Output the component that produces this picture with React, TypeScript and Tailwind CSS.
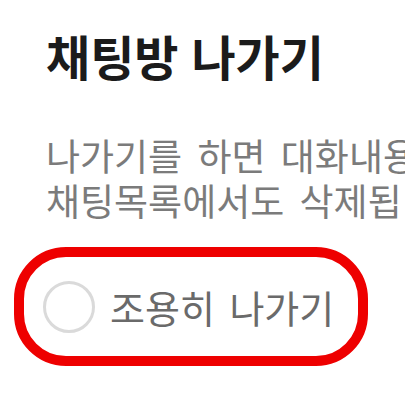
export default function App() {
  return (
    <div
      className="w-[405px] h-[405px] overflow-hidden bg-white"
      style={{ fontFamily: '"Noto Sans CJK KR", "Noto Sans", sans-serif' }}
    >
      {/* Title */}
      <div className="pl-[46px] pt-[25px]">
        <h1 className="text-[48px] leading-[60px] font-bold text-[#1b1b1b] whitespace-nowrap [word-spacing:2px]">
          채팅방 나가기
        </h1>
      </div>

      {/* Description */}
      <div className="pl-[46px] pt-[48px] text-[37px] leading-[45px] text-[#7b7b7b] whitespace-nowrap [word-spacing:7px]">
        <p>나가기를 하면 대화내용이 모두 삭제되고</p>
        <p>채팅목록에서도 삭제됩니다.</p>
      </div>

      {/* Option */}
      <div className="pl-[14px] pt-[24px]">
        <div className="w-[354px] h-[119px] rounded-[52px] border-[10px] border-[#ee0000] flex items-center pl-[19px] gap-[15px]">
          <span className="w-[52px] h-[52px] shrink-0 rounded-full border-[3px] border-[#dadada]" />
          <span className="text-[38px] leading-none text-[#6a6a6a] whitespace-nowrap [word-spacing:6px]">
            조용히 나가기
          </span>
        </div>
      </div>
    </div>
  );
}
